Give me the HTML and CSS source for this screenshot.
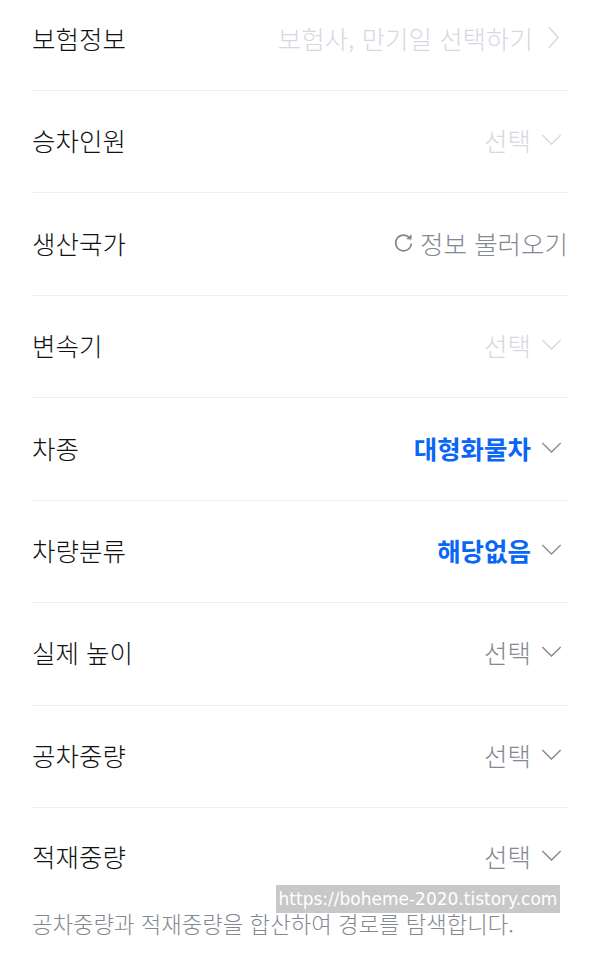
FILE: index.html
```html
<!DOCTYPE html>
<html lang="ko">
<head>
  <meta charset="UTF-8">
  <meta name="viewport" content="width=device-width, initial-scale=1.0">
  <title>차량 정보</title>
  <link rel="stylesheet" href="styles.css">
</head>
<body>
  <div class="list">
    <div class="row">
      <span class="label">보험정보</span>
      <span class="value faint">보험사, 만기일 선택하기
        <svg class="arrow-right" viewBox="0 0 14 26"><path d="M2 2 L12 13 L2 24"/></svg>
      </span>
    </div>
    <div class="row">
      <span class="label">승차인원</span>
      <span class="value faint">선택
        <svg class="arrow-down" viewBox="0 0 22 12"><path d="M1 1 L11 11 L21 1"/></svg>
      </span>
    </div>
    <div class="row">
      <span class="label">생산국가</span>
      <span class="value gray">
        <svg class="refresh" viewBox="0 0 20 20"><path d="M16.2 6.2 A7.5 7.5 0 1 0 17.5 11"/><path class="fill" d="M12.5 6.6 L17.6 7.4 L17.8 2.2 Z"/></svg>
        정보 불러오기
      </span>
    </div>
    <div class="row">
      <span class="label">변속기</span>
      <span class="value faint">선택
        <svg class="arrow-down" viewBox="0 0 22 12"><path d="M1 1 L11 11 L21 1"/></svg>
      </span>
    </div>
    <div class="row">
      <span class="label">차종</span>
      <span class="value blue">대형화물차
        <svg class="arrow-down" viewBox="0 0 22 12"><path d="M1 1 L11 11 L21 1"/></svg>
      </span>
    </div>
    <div class="row">
      <span class="label">차량분류</span>
      <span class="value blue">해당없음
        <svg class="arrow-down" viewBox="0 0 22 12"><path d="M1 1 L11 11 L21 1"/></svg>
      </span>
    </div>
    <div class="row">
      <span class="label">실제 높이</span>
      <span class="value gray">선택
        <svg class="arrow-down" viewBox="0 0 22 12"><path d="M1 1 L11 11 L21 1"/></svg>
      </span>
    </div>
    <div class="row">
      <span class="label">공차중량</span>
      <span class="value gray">선택
        <svg class="arrow-down" viewBox="0 0 22 12"><path d="M1 1 L11 11 L21 1"/></svg>
      </span>
    </div>
    <div class="row last">
      <span class="label">적재중량</span>
      <span class="value gray">선택
        <svg class="arrow-down" viewBox="0 0 22 12"><path d="M1 1 L11 11 L21 1"/></svg>
      </span>
    </div>
    <p class="note">공차중량과 적재중량을 합산하여 경로를 탐색합니다.</p>
  </div>
  <div class="watermark">https://boheme-2020.tistory.com</div>
</body>
</html>
```
FILE: styles.css
```css
body {
  margin: 0;
  background: #fff;
  font-family: "Noto Sans CJK KR", "Noto Sans", sans-serif;
  color: #1e1e1e;
  overflow: hidden;
  position: relative;
  height: 955px;
}
.list {
  margin: -11.4px 32px 0;
}
.row {
  box-sizing: border-box;
  height: 102.43px;
  padding-bottom: 4px;
  border-bottom: 1px solid #eeeff3;
  display: flex;
  align-items: center;
  justify-content: space-between;
}
.row.last {
  border-bottom: none;
  height: 100px;
}
.label {
  font-size: 25.5px;
  font-weight: 300;
  color: #111;
}
.value {
  font-size: 25.5px;
  font-weight: 300;
  display: flex;
  align-items: center;
}
.faint {
  color: #d6d8df;
}
.gray {
  color: #838891;
}
.blue {
  color: #0a66f5;
  font-weight: 700;
}
.value svg path {
  fill: none;
  stroke: currentColor;
  stroke-width: 1.5;
}
.blue svg path {
  stroke: #8a8f98;
}
.arrow-right {
  width: 13px;
  height: 25px;
  margin-left: 14px;
  margin-right: 8px;
}
.arrow-down {
  width: 21px;
  height: 11px;
  margin-left: 10px;
  margin-right: 6px;
}
.refresh {
  width: 21px;
  height: 21px;
  margin-right: 6px;
}
.value .refresh path.fill {
  fill: currentColor;
  stroke: none;
}
.note {
  margin: -1px 0 0;
  font-size: 22.3px;
  font-weight: 300;
  color: #838891;
}
.watermark {
  position: absolute;
  left: 276px;
  top: 885px;
  width: 284px;
  height: 28px;
  background: #c8c8c8;
  color: #fff;
  font-family: "DejaVu Sans", sans-serif;
  font-size: 17px;
  line-height: 28px;
  text-align: center;
}
```
